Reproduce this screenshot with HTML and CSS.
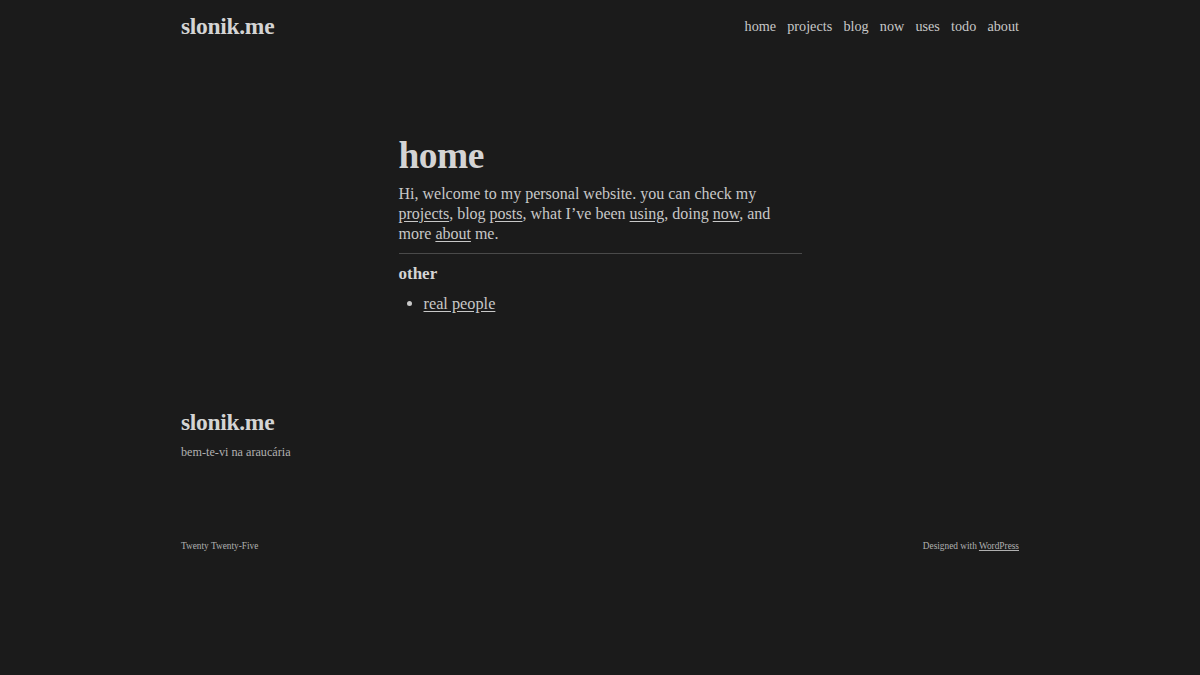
FILE: index.html
```html
<!DOCTYPE html>
<html lang="en">
<head>
    <meta charset="UTF-8">
    <meta name="viewport" content="width=device-width, initial-scale=1.0">
    <title>slonik.me</title>
    <link rel="stylesheet" href="styles.css">
</head>
<body>

    <!-- Hlavička -->
    <header class="site-header">
        <a class="site-title" href="#">slonik.me</a>
        <nav class="site-nav">
            <a href="#">home</a>
            <a href="#">projects</a>
            <a href="#">blog</a>
            <a href="#">now</a>
            <a href="#">uses</a>
            <a href="#">todo</a>
            <a href="#">about</a>
        </nav>
    </header>

    <!-- Obsah -->
    <main class="content">
        <h1>home</h1>
        <p class="intro">Hi, welcome to my personal website. you can check my<br><a href="#">projects</a>, blog <a href="#">posts</a>, what I’ve been <a href="#">using</a>, doing <a href="#">now</a>, and more <a href="#">about</a> me.</p>
        <hr class="separator">
        <h2>other</h2>
        <ul class="links">
            <li><a href="#">real people</a></li>
        </ul>
    </main>

    <!-- Pätička -->
    <footer class="site-footer">
        <div class="footer-title">slonik.me</div>
        <p class="tagline">bem-te-vi na araucária</p>
        <div class="footer-bottom">
            <span>Twenty Twenty-Five</span>
            <span>Designed with <a href="#">WordPress</a></span>
        </div>
    </footer>

</body>
</html>
```

FILE: styles.css
```css
html, body {
    background-color: #1b1b1b;
}

body {
    margin: 0;
    color: #d4d4d4;
    font-family: "Liberation Serif", "DejaVu Serif", serif;
}

a {
    color: inherit;
}

.site-header {
    width: 838px;
    margin: 0 auto;
    height: 52px;
    display: flex;
    align-items: center;
    justify-content: space-between;
}

.site-title {
    font-size: 23.5px;
    font-weight: bold;
    text-decoration: none;
    letter-spacing: -0.3px;
}

.site-nav {
    display: flex;
    gap: 11.2px;
    font-size: 14.2px;
}

.site-nav a {
    text-decoration: none;
    color: #c8c8c8;
}

/* Obsah */
.content {
    width: 403px;
    margin: 82px auto 0;
}

.content h1 {
    margin: 0;
    font-size: 37.5px;
    line-height: 44px;
    letter-spacing: -0.5px;
}

.intro {
    margin: 6px 0 0;
    font-size: 16px;
    line-height: 20px;
    color: #c8c8c8;
}

.intro a {
    text-underline-offset: 2px;
}

.separator {
    border: none;
    border-top: 1px solid #4a4a4a;
    margin: 9px 0 0;
}

.content h2 {
    margin: 10px 0 0;
    font-size: 17px;
    line-height: 20px;
}

.links {
    margin: 9px 0 0;
    padding-left: 25px;
    font-size: 16.3px;
    line-height: 22px;
    color: #c8c8c8;
}

.links a {
    text-underline-offset: 2px;
}

/* Pätička */
.site-footer {
    width: 838px;
    margin: 94px auto 0;
}

.footer-title {
    font-size: 23.5px;
    font-weight: bold;
    line-height: 26px;
    letter-spacing: -0.3px;
}

.tagline {
    margin: 10px 0 0;
    font-size: 12.2px;
    color: #b0b0b0;
}

.footer-bottom {
    margin-top: 81px;
    display: flex;
    justify-content: space-between;
    font-size: 9.3px;
    color: #b0b0b0;
}
```
